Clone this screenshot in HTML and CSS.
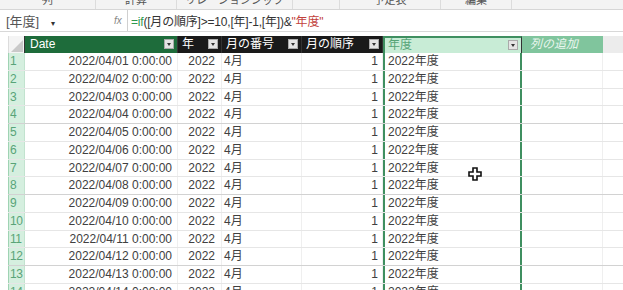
FILE: index.html
```html
<!DOCTYPE html>
<html>
<head>
  <meta charset="UTF-8" />
  <title>年度</title>
  <link rel="stylesheet" href="styles.css">
</head>
<body>
  <div class="ribbon">
    <div class="group g1"><span>列</span></div>
    <div class="group g2"><span>計算</span></div>
    <div class="group g3"><span>リレーションシップ</span></div>
    <div class="group g4"><span></span></div>
    <div class="group g5"><span>予定表</span></div>
    <div class="group g6"><span>編集</span></div>
    <div class="group g7"><span></span></div>
  </div>

  <div class="formula-bar">
    <div class="name-box">[年度]<span class="caret">▾</span></div>
    <div class="fx">fx</div>
    <div class="formula"><span class="fn">=if</span>([月の順序]&gt;=10,[年]-1,[年])&amp;<span class="str">"年度"</span></div>
  </div>

  <div class="sheet">
    <div class="row head">
      <div class="cell num corner"><span class="tri"></span></div>
      <div class="cell c-date h-date">Date<span class="dd"></span></div>
      <div class="cell c-year h-dark">年<span class="dd"></span></div>
      <div class="cell c-mnum h-dark">月の番号<span class="dd"></span></div>
      <div class="cell c-mord h-dark">月の順序<span class="dd"></span></div>
      <div class="cell c-fy h-fy">年度<span class="dd"></span></div>
      <div class="cell c-add h-add">列の追加</div>
      <div class="cell c-rest h-rest"></div>
    </div>
    <div id="rows"></div>
    <svg class="cursor" width="14" height="14" viewBox="0 0 14 14">
      <path d="M5 1h4v4h4v4h-4v4h-4v-4h-4v-4h4z" fill="#fff" stroke="#111" stroke-width="1.6"/>
    </svg>
  </div>

  <script>
    const rows = document.getElementById('rows');
    for (let i = 1; i <= 14; i++) {
      const d = String(i).padStart(2, '0');
      rows.insertAdjacentHTML('beforeend',
        '<div class="row' + (i % 4 === 0 ? ' strong' : '') + '">' +
        '<div class="cell num">' + i + '</div>' +
        '<div class="cell c-date">2022/04/' + d + ' 0:00:00</div>' +
        '<div class="cell c-year">2022</div>' +
        '<div class="cell c-mnum">4月</div>' +
        '<div class="cell c-mord">1</div>' +
        '<div class="cell c-fy">2022年度</div>' +
        '<div class="cell c-add"></div>' +
        '<div class="cell c-rest"></div>' +
        '</div>');
    }
  </script>
</body>
</html>
```

FILE: styles.css
```css
body {
  margin: 0;
  width: 623px;
  height: 290px;
  overflow: hidden;
  background: #fff;
  font-family: "Liberation Sans", "Noto Sans CJK JP", sans-serif;
  color: #404040;
}

.ribbon {
  display: flex;
  height: 9px;
  overflow: hidden;
  background: #f3f3f3;
  border-bottom: 1px solid #d6d6d6;
}

.group {
  border-right: 1px solid #dcdcdc;
  text-align: center;
  font-size: 11px;
  line-height: 11px;
  color: #555;
}

.group span {
  display: block;
  margin-top: -5px;
}

.g1 { width: 95px; }
.g2 { width: 80px; }
.g3 { width: 115px; }
.g4 { width: 46px; }
.g5 { width: 100px; }
.g6 { width: 70px; }
.g7 { flex: 1; border-right: none; }

.formula-bar {
  display: flex;
  align-items: center;
  height: 21px;
  border-bottom: 1px solid #d8d8d8;
  font-size: 12px;
  margin-bottom: 4px;
}

.name-box {
  width: 108px;
  padding-left: 6px;
  color: #555;
  font-size: 13px;
}

.caret {
  margin-left: 12px;
  font-size: 8px;
  color: #333;
}

.fx {
  width: 13px;
  height: 21px;
  line-height: 21px;
  font-style: italic;
  font-size: 10px;
  color: #888;
  border-right: 1px solid #d0d0d0;
}

.formula {
  padding-left: 3px;
  color: #333;
  letter-spacing: -0.2px;
}

.fn { color: #2f9a4e; }
.str { color: #c2413b; }

.sheet {
  position: relative;
  padding-left: 8px;
}

.row {
  display: flex;
  height: 17.75px;
  box-sizing: border-box;
  border-bottom: 1px solid #e6e6e6;
  font-size: 12px;
}

.row.strong { border-bottom-color: #d2d2d2; }

.row.head {
  height: 17px;
  border-bottom: none;
  color: #fff;
}

.cell {
  position: relative;
  box-sizing: border-box;
  height: 100%;
  line-height: 17px;
  white-space: nowrap;
  overflow: hidden;
  border-right: 1px solid #efefef;
}

.num {
  width: 17px;
  padding-left: 1px;
  background: #d5efdf;
  color: #58a478;
  font-size: 12px;
  letter-spacing: -0.5px;
  border-left: 1px solid #9fd3b3;
  border-right: 1px solid #c2e3cf;
}

.corner {
  background: #f4f4f4;
  border-left: 1px solid #dcdcdc;
}

.tri {
  position: absolute;
  right: 1px;
  bottom: 1px;
  width: 0;
  height: 0;
  border-left: 12px solid transparent;
  border-bottom: 12px solid #c9c9c9;
}

.c-date { width: 153px; text-align: right; padding-right: 5px; }
.c-year { width: 44px; text-align: right; padding-right: 6px; }
.c-mnum { width: 80px; padding-left: 2px; }
.c-mord { width: 81px; text-align: right; padding-right: 4px; }
.c-fy {
  width: 139px;
  padding-left: 3px;
  border-left: 2px solid #3f8f60;
  border-right: 2px solid #3f8f60;
}
.c-add { width: 81px; }
.c-rest { flex: 1; border-right: none; }

.head .cell { border-right: 1px solid #333; }

.h-date {
  background: #1e6c3b;
  text-align: left;
  padding-left: 5px;
  border-right-color: #1e6c3b;
}

.h-dark {
  background: #1a1a1a;
  text-align: left;
  padding-left: 4px;
}

.h-fy {
  background: #c8ecd6;
  color: #56a476;
  border: 2px solid #3f8f60;
  border-bottom: none;
  line-height: 15px;
}

.h-add {
  background: #80c59d;
  color: #e9f6ee;
  font-style: italic;
  padding-left: 8px;
  border-right-color: #80c59d !important;
}

.h-rest {
  background: #ececec;
  border-right: none !important;
}

.dd {
  position: absolute;
  right: 3px;
  top: 3px;
  width: 10px;
  height: 10px;
  box-sizing: border-box;
  background: #e4e4e4;
  border: 1px solid #aaa;
}

.dd::after {
  content: "";
  position: absolute;
  left: 2px;
  top: 3px;
  border-left: 2px solid transparent;
  border-right: 2px solid transparent;
  border-top: 3px solid #333;
}

.h-fy .dd { right: 3px; top: 2px; }

.cursor {
  position: absolute;
  left: 468px;
  top: 131px;
}
```
